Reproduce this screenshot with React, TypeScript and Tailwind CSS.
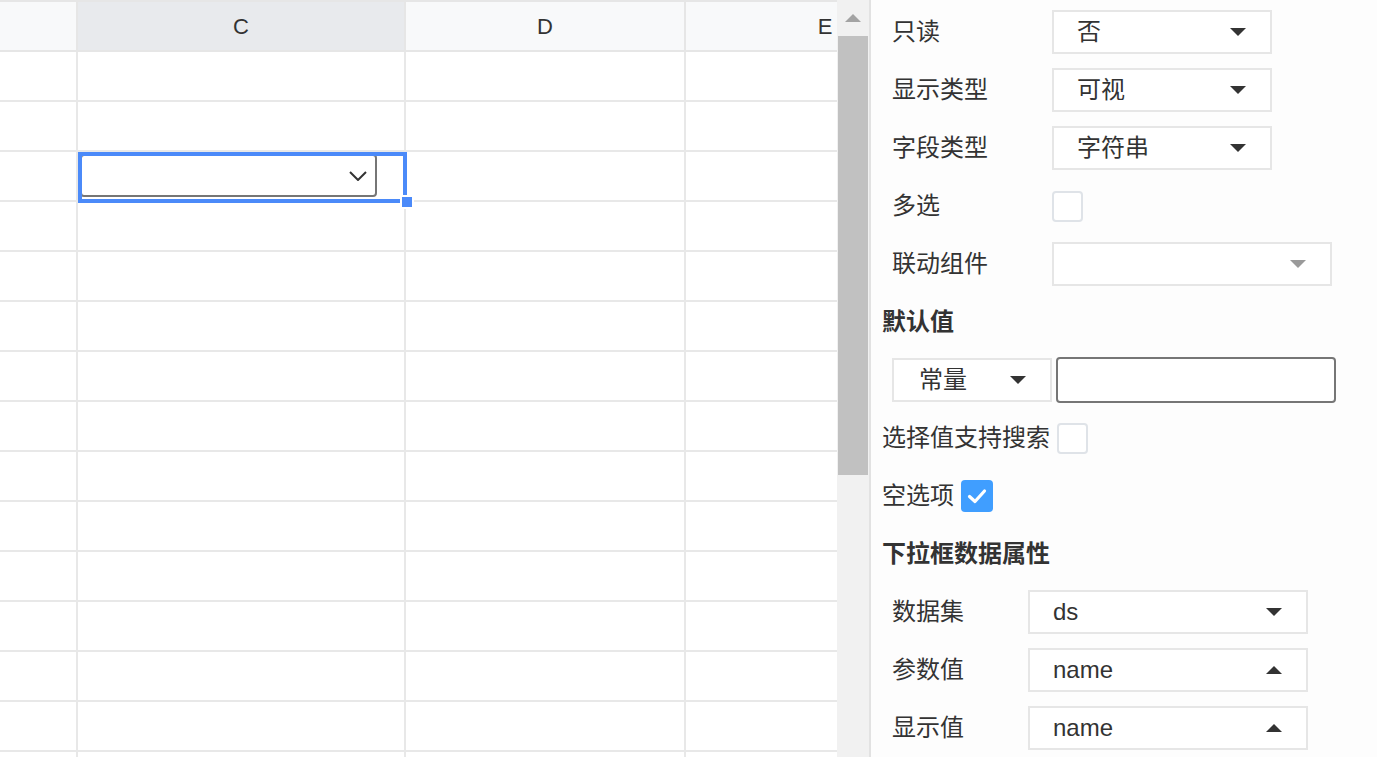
import React from 'react';

const FONT = { fontFamily: "'Liberation Sans', 'Noto Sans CJK SC', sans-serif" };

// 小三角
const Caret: React.FC<{ up?: boolean; muted?: boolean }> = ({ up, muted }) => (
  <svg width="16" height="8" viewBox="0 0 16 8">
    <path d={up ? 'M0 8 L8 0 L16 8 Z' : 'M0 0 L16 0 L8 8 Z'} fill={muted ? '#9a9a9a' : '#333333'} />
  </svg>
);

const Select: React.FC<{ value?: string; className: string; up?: boolean; muted?: boolean }> = ({
  value,
  className,
  up,
  muted,
}) => (
  <div
    className={`h-[44px] border-2 border-[#e6e6e6] bg-white flex items-center justify-between pl-[23px] pr-[24px] ${className}`}
  >
    <span className="leading-none">{value}</span>
    <Caret up={up} muted={muted} />
  </div>
);

const Checkbox: React.FC<{ checked?: boolean; className?: string }> = ({ checked, className = '' }) =>
  checked ? (
    <div className={`w-[32px] h-[32px] rounded-[4px] bg-[#409eff] flex items-center justify-center ${className}`}>
      <svg width="22" height="18" viewBox="0 0 22 18">
        <path d="M3.5 9.5 L9 14.5 L18.5 4" fill="none" stroke="#fff" strokeWidth="3.2" strokeLinecap="round" strokeLinejoin="round" />
      </svg>
    </div>
  ) : (
    <div className={`w-[31px] h-[31px] rounded-[4px] border-2 border-[#dfe3e8] bg-white ${className}`} />
  );

const columns = [
  { key: 'B', w: 'w-[78px]', head: 'bg-[#f8f9fa]' },
  { key: 'C', w: 'w-[328px]', head: 'bg-[#e8eaed]' },
  { key: 'D', w: 'w-[280px]', head: 'bg-[#f8f9fa]' },
  { key: 'E', w: 'w-[280px]', head: 'bg-[#f8f9fa]' },
];

const rows = Array.from({ length: 15 }, (_, i) => i);

function Sheet() {
  return (
    <div className="relative w-[837px] h-full overflow-hidden bg-white">
      {/* 表头 */}
      <div className="flex w-[966px] h-[52px] border-t-2 border-b-2 border-[#e6e6e6]">
        {columns.map((c) => (
          <div
            key={c.key}
            className={`${c.w} shrink-0 h-full border-r-2 border-[#e6e6e6] ${c.head} flex items-center justify-center text-[22px] text-[#333]`}
          >
            {c.key === 'B' ? '' : c.key}
          </div>
        ))}
      </div>
      {/* 单元格 */}
      {rows.map((r) => (
        <div key={r} className="flex w-[966px] h-[50px] border-b-2 border-[#e8e8e8]">
          {columns.map((c) => (
            <div key={c.key} className={`${c.w} shrink-0 h-full border-r-2 border-[#e8e8e8] relative`}>
              {r === 2 && c.key === 'C' && (
                <div className="absolute left-[2px] top-[2px] w-[297px] h-[43px] border-2 border-[#767676] rounded-[4px] flex items-center justify-end pr-[8px]">
                  <svg width="18" height="10" viewBox="0 0 18 10">
                    <path d="M1 1 L9 9 L17 1" fill="none" stroke="#333" strokeWidth="2" />
                  </svg>
                </div>
              )}
            </div>
          ))}
        </div>
      ))}
      {/* 选中框 */}
      <div className="absolute left-[78px] top-[152px] w-[329px] h-[51px] border-4 border-[#4b8af9] pointer-events-none" />
      <div className="absolute left-[400px] top-[195px] w-[14px] h-[14px] border-2 border-white bg-[#4b8af9]" />
    </div>
  );
}

function Scrollbar() {
  return (
    <div className="w-[32px] h-full bg-[#f1f1f1] flex flex-col items-center shrink-0">
      <div className="h-[36px] w-full flex items-center justify-center">
        <svg width="16" height="8" viewBox="0 0 16 8">
          <path d="M0 8 L8 0 L16 8 Z" fill="#a3a3a3" />
        </svg>
      </div>
      <div className="w-[30px] h-[439px] bg-[#c1c1c1]" />
    </div>
  );
}

function Panel() {
  return (
    <div className="flex-1 h-full border-l-2 border-[#e2e2e2] bg-[#fdfdfd] pl-[11px] pt-[10px] flex flex-col gap-[14px] text-[24px] text-[#333] overflow-hidden">
      <div className="h-[44px] flex items-center pl-[10px]">
        <span className="w-[160px]">只读</span>
        <Select className="w-[220px]" value="否" />
      </div>
      <div className="h-[44px] flex items-center pl-[10px]">
        <span className="w-[160px]">显示类型</span>
        <Select className="w-[220px]" value="可视" />
      </div>
      <div className="h-[44px] flex items-center pl-[10px]">
        <span className="w-[160px]">字段类型</span>
        <Select className="w-[220px]" value="字符串" />
      </div>
      <div className="h-[44px] flex items-center pl-[10px]">
        <span className="w-[160px]">多选</span>
        <Checkbox />
      </div>
      <div className="h-[44px] flex items-center pl-[10px]">
        <span className="w-[160px]">联动组件</span>
        <Select className="w-[280px]" muted />
      </div>
      <div className="h-[44px] flex items-center font-bold">默认值</div>
      <div className="h-[44px] flex items-center pl-[10px]">
        <Select className="w-[160px] pl-[25px]" value="常量" />
        <div className="ml-[4px] w-[280px] h-[46px] border-2 border-[#767676] rounded-[4px] bg-white" />
      </div>
      <div className="h-[44px] flex items-center">
        <span>选择值支持搜索</span>
        <Checkbox className="ml-[7px]" />
      </div>
      <div className="h-[44px] flex items-center">
        <span>空选项</span>
        <Checkbox checked className="ml-[7px]" />
      </div>
      <div className="h-[44px] flex items-center font-bold">下拉框数据属性</div>
      <div className="h-[44px] flex items-center pl-[10px]">
        <span className="w-[136px]">数据集</span>
        <Select className="w-[280px]" value="ds" />
      </div>
      <div className="h-[44px] flex items-center pl-[10px]">
        <span className="w-[136px]">参数值</span>
        <Select className="w-[280px]" value="name" up />
      </div>
      <div className="h-[44px] flex items-center pl-[10px]">
        <span className="w-[136px]">显示值</span>
        <Select className="w-[280px]" value="name" up />
      </div>
    </div>
  );
}

export default function App() {
  return (
    <div className="w-[1377px] h-[757px] flex overflow-hidden bg-white" style={FONT}>
      <Sheet />
      <Scrollbar />
      <Panel />
    </div>
  );
}
